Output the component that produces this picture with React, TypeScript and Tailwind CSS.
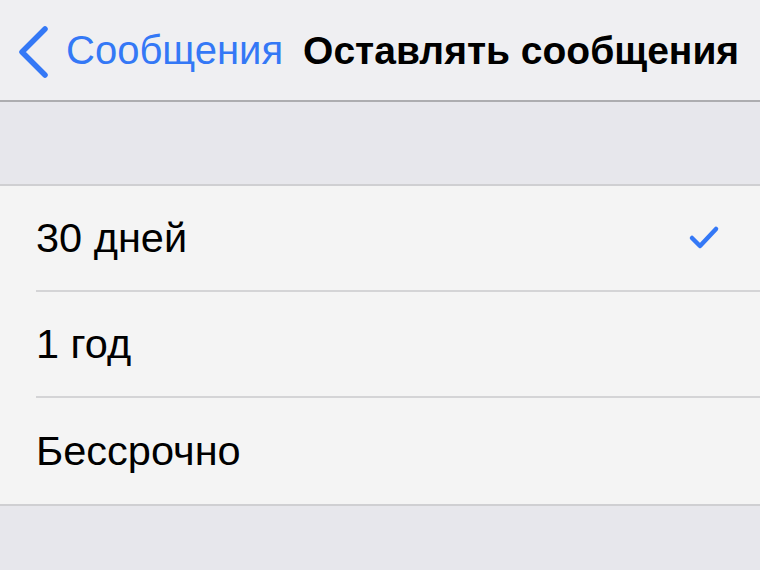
import React from "react";

const options = [
  { label: "30 дней", checked: true },
  { label: "1 год", checked: false },
  { label: "Бессрочно", checked: false },
];

export default function App() {
  return (
    <div
      className="w-[760px] h-[570px] bg-[#e7e7ec] overflow-hidden"
      style={{ fontFamily: '"Liberation Sans", Arial, sans-serif' }}
    >
      {/* nav bar */}
      <div className="h-[102px] bg-[#efeff2] border-b-2 border-[#adadb0] flex items-center">
        <svg width="50" height="60" viewBox="0 0 50 60" className="ml-[8px] shrink-0">
          <path d="M37 9 L14 32 L37 55" fill="none" stroke="#3478f6" strokeWidth="5.5" strokeLinecap="round" strokeLinejoin="round" />
        </svg>
        <span className="ml-[8px] text-[40px] text-[#3478f6] leading-none whitespace-nowrap">Сообщения</span>
        <span className="ml-[20px] text-[39px] font-bold text-black leading-none whitespace-nowrap">Оставлять сообщения</span>
      </div>

      <div className="h-[82px]" />

      {/* options */}
      <div className="bg-[#f4f4f4] border-y-2 border-[#cfcfd2]">
        {options.map((o, i) => (
          <div key={o.label} className="pl-[36px]">
            <div
              className={
                "h-[106px] flex items-center justify-between pr-[38px] " +
                (i < options.length - 1 ? "border-b-2 border-[#d4d4d6]" : "")
              }
            >
              <span className="text-[41.5px] text-black leading-none">{o.label}</span>
              {o.checked && (
                <svg width="34" height="28" viewBox="0 0 34 28">
                  <path d="M4 14 L12 22 L28 5" fill="none" stroke="#3478f6" strokeWidth="4.5" strokeLinecap="round" strokeLinejoin="round" />
                </svg>
              )}
            </div>
          </div>
        ))}
      </div>
    </div>
  );
}
